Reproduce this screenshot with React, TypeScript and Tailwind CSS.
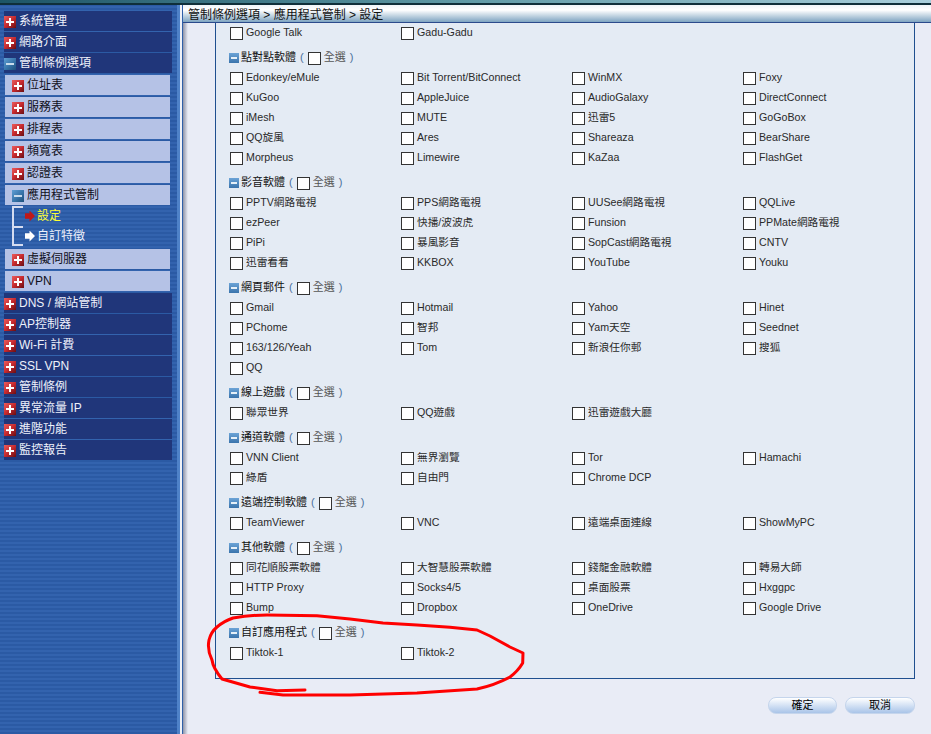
const topMenu = ['系統管理', '網路介面']
const subMenu = ['位址表', '服務表', '排程表', '頻寬表', '認證表']
const bottomMenu = ['DNS / 網站管制', 'AP控制器', 'Wi-Fi 計費', 'SSL VPN', '管制條例', '異常流量 IP', '進階功能', '監控報告']

const sections = [
    {
        title: '點對點軟體',
        items: ['Edonkey/eMule', 'Bit Torrent/BitConnect', 'WinMX', 'Foxy', 'KuGoo', 'AppleJuice', 'AudioGalaxy', 'DirectConnect', 'iMesh', 'MUTE', '迅雷5', 'GoGoBox', 'QQ旋風', 'Ares', 'Shareaza', 'BearShare', 'Morpheus', 'Limewire', 'KaZaa', 'FlashGet'],
    },
    {
        title: '影音軟體',
        items: ['PPTV網路電視', 'PPS網路電視', 'UUSee網路電視', 'QQLive', 'ezPeer', '快播/波波虎', 'Funsion', 'PPMate網路電視', 'PiPi', '暴風影音', 'SopCast網路電視', 'CNTV', '迅雷看看', 'KKBOX', 'YouTube', 'Youku'],
    },
    {
        title: '網頁郵件',
        items: ['Gmail', 'Hotmail', 'Yahoo', 'Hinet', 'PChome', '智邦', 'Yam天空', 'Seednet', '163/126/Yeah', 'Tom', '新浪任你郵', '搜狐', 'QQ'],
    },
    { title: '線上遊戲', items: ['聯眾世界', 'QQ遊戲', '迅雷遊戲大廳'] },
    { title: '通道軟體', items: ['VNN Client', '無界瀏覽', 'Tor', 'Hamachi', '綠盾', '自由門', 'Chrome DCP'] },
    { title: '遠端控制軟體', items: ['TeamViewer', 'VNC', '遠端桌面連線', 'ShowMyPC'] },
    {
        title: '其他軟體',
        items: ['同花順股票軟體', '大智慧股票軟體', '錢龍金融軟體', '轉易大師', 'HTTP Proxy', 'Socks4/5', '桌面股票', 'Hxggpc', 'Bump', 'Dropbox', 'OneDrive', 'Google Drive'],
    },
    { title: '自訂應用程式', items: ['Tiktok-1', 'Tiktok-2'] },
]

function PlusIcon() {
    return (
        <span className="relative block w-3 h-3 mt-[2px] shrink-0 bg-gradient-to-br from-[#ea5a5c] via-[#c62a2f] to-[#6a0e12]">
            <span className="absolute left-[2px] top-[5px] w-2 h-[2px] bg-white" />
            <span className="absolute left-[5px] top-[2px] w-[2px] h-2 bg-white" />
        </span>
    )
}

function MinusIcon() {
    return (
        <span className="relative block w-3 h-3 mt-[2px] shrink-0 bg-gradient-to-br from-[#5f9fd4] via-[#3a78ad] to-[#1c4f7c]">
            <span className="absolute left-[2px] top-[5px] w-2 h-[2px] bg-[#c9dcec]" />
        </span>
    )
}

function SectionIcon() {
    return (
        <span className="relative block w-[10px] h-[10px] ml-[-1px] shrink-0 bg-gradient-to-b from-[#6ba3d6] to-[#3a74ac]">
            <span className="absolute left-[2px] top-1 w-[6px] h-[2px] bg-[#e6f0f8]" />
        </span>
    )
}

function DarkRow({ label, open }: { label: string; open?: boolean }) {
    return (
        <div className="h-5 mb-px ml-1 w-[168px] bg-[#20367a] flex items-center gap-[3px] text-xs text-[#eef1fb]">
            {open ? <MinusIcon /> : <PlusIcon />}
            <span>{label}</span>
        </div>
    )
}

function SubRow({ label, open }: { label: string; open?: boolean }) {
    return (
        <div className="h-5 mb-[2px] ml-[5px] w-[165px] bg-[#b5c2e6] flex items-center gap-[3px] pl-[7px] text-xs text-[#101020]">
            {open ? <MinusIcon /> : <PlusIcon />}
            <span>{label}</span>
        </div>
    )
}

function TreeRow({ label, active, last }: { label: string; active?: boolean; last?: boolean }) {
    return (
        <div className="h-5 flex">
            <span className={last ? 'w-[11px] h-[20px] border-l-2 border-t-2 border-b-2 border-[#d5dcf0]' : 'w-[11px] border-l-2 border-t-2 border-[#d5dcf0]'} />
            <div className="flex items-center">
                <span className={active
                    ? 'ml-[2px] w-[10px] h-[11px] bg-[#c01818] [clip-path:polygon(0_25%,45%_25%,45%_0,100%_50%,45%_100%,45%_75%,0_75%)]'
                    : 'ml-[2px] w-[10px] h-[11px] bg-white [clip-path:polygon(0_25%,45%_25%,45%_0,100%_50%,45%_100%,45%_75%,0_75%)]'} />
                <span className={active ? 'ml-[2px] text-xs text-[#ffff33]' : 'ml-[2px] text-xs text-[#eef1fb]'}>{label}</span>
            </div>
        </div>
    )
}

function Checkbox() {
    return <span className="block w-[13px] h-[13px] shrink-0 bg-white border border-[#333]" />
}

function Section({ title, items }: { title: string; items: string[] }) {
    return (
        <div className="mt-[5px]">
            <div className="h-5 flex items-center text-[11px]">
                <SectionIcon />
                <span className="ml-[2px] pb-[2px] text-[#111]">{title}</span>
                <span className="ml-1 pb-[2px] text-[#4a6f9c]">(</span>
                <span className="ml-1"><Checkbox /></span>
                <span className="ml-[3px] pb-[2px] text-[#555]">全選</span>
                <span className="ml-1 pb-[2px] text-[#4a6f9c]">)</span>
            </div>
            <Items items={items} />
        </div>
    )
}

function Items({ items }: { items: string[] }) {
    return (
        <div className="grid grid-cols-[171px_171px_171px_171px]">
            {items.map((item) => (
                <div key={item} className="h-5 flex items-center gap-[3px] text-[10.67px] text-[#2a2a2a]">
                    <Checkbox />
                    <span className="pb-[2px]">{item}</span>
                </div>
            ))}
        </div>
    )
}

export default function App() {
    return (
        <div className="relative w-[931px] h-[734px] overflow-hidden bg-[#e9ecf6] font-['Liberation_Sans','Noto_Sans_CJK_TC',sans-serif]">
            <div className="h-[3px] bg-gradient-to-r from-[#1d5566] via-[#5f9aa6] to-[#a9cfdc]" />
            <div className="h-[2px] bg-[#0f2f3a]" />
            <div className="flex h-[729px]">
                <aside className="w-[180px] pt-[6px] border-r-[3px] border-[#4f82c8] bg-[repeating-linear-gradient(0deg,#2b5aa4_0px,#2b5aa4_2px,#3363ae_2px,#3363ae_4px)]">
                    {topMenu.map((label) => <DarkRow key={label} label={label} />)}
                    <DarkRow label="管制條例選項" open />
                    <div className="pt-px">
                        {subMenu.map((label) => <SubRow key={label} label={label} />)}
                        <SubRow label="應用程式管制" open />
                    </div>
                    <div className="ml-3 -mt-px mb-[2px]">
                        <TreeRow label="設定" active />
                        <TreeRow label="自訂特徵" last />
                    </div>
                    <div className="pt-px">
                        <SubRow label="虛擬伺服器" />
                        <SubRow label="VPN" />
                    </div>
                    {bottomMenu.map((label) => <DarkRow key={label} label={label} />)}
                </aside>
                <div className="w-[2px] bg-[#eef1f8]" />
                <main className="flex-1 min-w-0 flex flex-col border-l border-[#2f5fa8]">
                    <div className="h-[18px] shrink-0 pt-[3px] pl-[5px] bg-[linear-gradient(180deg,#f0f5f9,#ffffff_30%,#7ea4c1)] border-b border-[#2b4a8c] text-xs leading-[14px] text-[#111]">
                        管制條例選項 &gt; 應用程式管制 &gt; 設定
                    </div>
                    <div className="flex-1 bg-[linear-gradient(90deg,#8f94a8,#e9ecf6_5px)]">
                        <div className="ml-[32px] w-[700px] h-[656px] px-[14px] bg-[#e4ebf4] border-x border-b border-[#1f4f8f]">
                            <Items items={['Google Talk', 'Gadu-Gadu']} />
                            {sections.map((section) => (
                                <Section key={section.title} title={section.title} items={section.items} />
                            ))}
                        </div>
                        <div className="flex justify-end gap-2 pr-4 pt-[18px]">
                            <button className="w-[69px] h-[17px] rounded-lg border border-[#c5d5ec] bg-gradient-to-b from-white to-[#a9c4e8] text-[11px] leading-none text-black">確定</button>
                            <button className="w-[70px] h-[17px] rounded-lg border border-[#c5d5ec] bg-gradient-to-b from-white to-[#a9c4e8] text-[11px] leading-none text-black">取消</button>
                        </div>
                    </div>
                </main>
            </div>
            <svg className="absolute left-0 top-0 pointer-events-none" width="931" height="734" fill="none">
                <path
                    d="M305 690 L277 690.7 L250 687 L222 679 Q213 668 212 660 Q207 650 209 640 Q211 632 217 627 Q224 621 233 618 Q250 615 267 615 L317 615.7 L350 619 L383 623 L417 625 L450 627.3 L477 630 L490 636 L510 647 L523 653 L522.7 663 Q518 671 510 677 Q495 685 477 689 L417 693 L350 695 L283 695 L260 692.3"
                    stroke="#ff0000"
                    strokeWidth="3"
                    strokeLinecap="round"
                    strokeLinejoin="round"
                />
            </svg>
        </div>
    )
}
